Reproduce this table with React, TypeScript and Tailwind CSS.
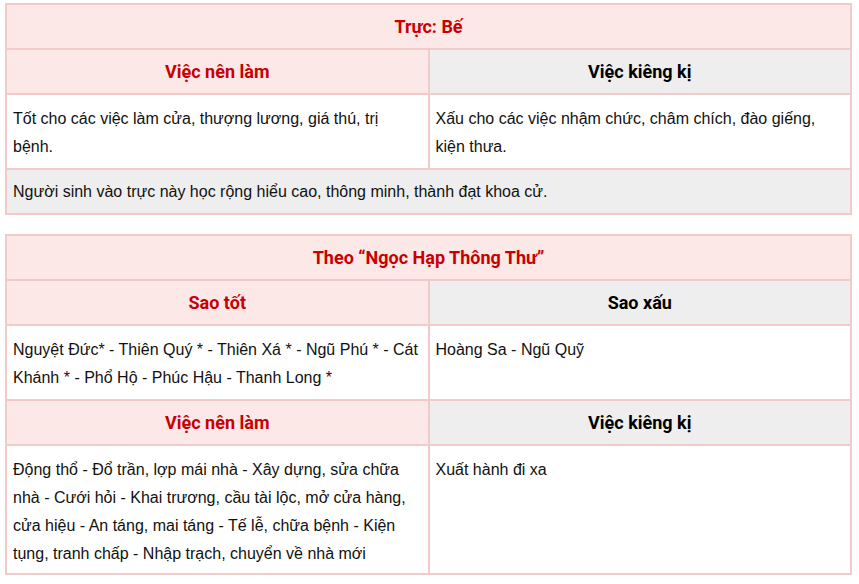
const border = "border-2 border-[#f2caca]";

function HeadCell({ children, tone }: { children: React.ReactNode; tone: "red" | "gray" }) {
  return (
    <th
      className={`${border} py-[10px] px-2 text-center text-[18px] leading-[23px] font-bold ${
        tone === "red" ? "bg-[#fde8e8] text-[#c80000]" : "bg-[#eeeeee] text-black"
      }`}
      style={{ fontFamily: "Roboto, sans-serif" }}
    >
      {children}
    </th>
  );
}

function Cell({ children, tight }: { children: React.ReactNode; tight?: boolean }) {
  return (
    <td className={`${border} align-top px-[6px] pt-[10px] ${tight ? "pb-[5px]" : "pb-[7px]"} bg-white`}>
      {children}
    </td>
  );
}

export default function App() {
  return (
    <div className="bg-white w-[859px] h-[584px] pl-[5px] pt-[3px]" style={{ fontFamily: '"Liberation Sans", Arial, sans-serif' }}>
      <table className={`w-[847px] table-fixed border-collapse text-[16px] leading-7 text-[#111]`}>
        <tbody>
          <tr>
            <th colSpan={2} className={`${border} bg-[#fde8e8] text-[#c80000] text-[18px] leading-[23px] py-[10px] font-bold`} style={{ fontFamily: "Roboto, sans-serif" }}>
              Trực: Bế
            </th>
          </tr>
          <tr>
            <HeadCell tone="red">Việc nên làm</HeadCell>
            <HeadCell tone="gray">Việc kiêng kị</HeadCell>
          </tr>
          <tr>
            <Cell>Tốt cho các việc làm cửa, thượng lương, giá thú, trị bệnh.</Cell>
            <Cell>Xấu cho các việc nhậm chức, châm chích, đào giếng, kiện thưa.</Cell>
          </tr>
          <tr>
            <td colSpan={2} className={`${border} bg-[#eeeeee] px-[6px] pt-[8px] pb-[7px]`}>
              Người sinh vào trực này học rộng hiểu cao, thông minh, thành đạt khoa cử.
            </td>
          </tr>
        </tbody>
      </table>

      <table className={`mt-[19px] w-[847px] table-fixed border-collapse text-[16px] leading-7 text-[#111]`}>
        <tbody>
          <tr>
            <th colSpan={2} className={`${border} bg-[#fde8e8] text-[#c80000] text-[18px] leading-[23px] py-[10px] font-bold`} style={{ fontFamily: "Roboto, sans-serif" }}>
              Theo “Ngọc Hạp Thông Thư”
            </th>
          </tr>
          <tr>
            <HeadCell tone="red">Sao tốt</HeadCell>
            <HeadCell tone="gray">Sao xấu</HeadCell>
          </tr>
          <tr>
            <Cell>Nguyệt Đức* - Thiên Quý * - Thiên Xá * - Ngũ Phú * - Cát Khánh * - Phổ Hộ - Phúc Hậu - Thanh Long *</Cell>
            <Cell>Hoàng Sa - Ngũ Quỹ</Cell>
          </tr>
          <tr>
            <HeadCell tone="red">Việc nên làm</HeadCell>
            <HeadCell tone="gray">Việc kiêng kị</HeadCell>
          </tr>
          <tr>
            <Cell tight>
              Động thổ - Đổ trần, lợp mái nhà - Xây dựng, sửa chữa nhà - Cưới hỏi - Khai trương, cầu tài lộc, mở cửa hàng, cửa hiệu - An táng, mai táng - Tế lễ, chữa bệnh - Kiện tụng, tranh chấp - Nhập trạch, chuyển về nhà mới
            </Cell>
            <Cell tight>Xuất hành đi xa</Cell>
          </tr>
        </tbody>
      </table>
    </div>
  );
}
